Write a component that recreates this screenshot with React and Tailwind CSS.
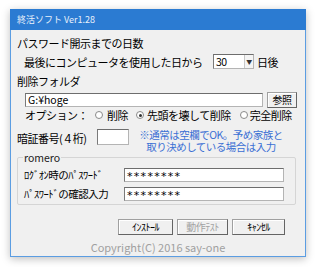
const jp = "font-['Meiryo_UI','Noto_Sans_CJK_JP',sans-serif]"

function Radio({ checked }) {
  return (
    <span className="flex h-[8px] w-[8px] items-center justify-center rounded-full border border-[#8a8a8a] bg-white">
      {checked && <span className="h-[3px] w-[3px] rounded-full bg-[#333]" />}
    </span>
  )
}

function Button({ children, disabled, w }) {
  return (
    <div
      className={`flex h-[16px] items-center justify-center border border-[#a0a0a0] border-b-[#646464] border-r-[#646464] bg-[#f0f0f0] text-[10px] shadow-[inset_1px_1px_0_#fff] ${w} ${
        disabled ? 'text-[#a3a3a3]' : 'text-black'
      }`}
    >
      {children}
    </div>
  )
}

function Field({ children, className }) {
  return (
    <div
      className={`flex items-center border border-[#b4b4b4] border-l-[#7a7a7a] border-t-[#6d6d6d] bg-white ${className}`}
    >
      {children}
    </div>
  )
}

export default function App() {
  return (
    <div className={`h-[267px] w-[316px] bg-white pl-[10px] pt-[9px] ${jp}`}>
      <div className="flex h-[248px] w-[296px] flex-col border border-[#5b9de2] bg-[#f0f0f0] shadow-[0_2px_8px_rgba(0,0,0,0.25)]">
        {/* title bar */}
        <div className="-mx-px -mt-px flex h-[21px] items-center bg-[#2b7bd2] pl-[7px] text-[9px] text-[#e8f1fb]">
          終活ソフト Ver1.28
        </div>

        <div className="flex flex-col pl-[6px] text-[11px] leading-[16px] tracking-[-0.5px] text-black">
          <div className="mt-[5px]">パスワード開示までの日数</div>

          <div className="mt-[3px] flex h-[15px] items-center pl-[7px]">
            <span className="w-[189px]">最後にコンピュータを使用した日から</span>
            <Field className="h-[15px] w-[41px] justify-between">
              <span className="pl-[2px] text-[10.5px]">30</span>
              <span className="flex h-[13px] w-[9px] items-center justify-center border-l border-[#c8c8c8] bg-[#f4f4f4] text-[6px] text-[#333]">
                ▼
              </span>
            </Field>
            <span className="ml-[3px]">日後</span>
          </div>

          <div className="mt-[4px]">削除フォルダ</div>

          <div className="mt-[3px] flex items-center pl-[8px]">
            <Field className="h-[14px] w-[238px]">
              <span className="pl-[2px] text-[10.5px] tracking-normal">G:¥hoge</span>
            </Field>
            <div className="ml-[4px]">
              <Button w="w-[30px]">参照</Button>
            </div>
          </div>

          <div className="flex h-[14px] items-center pl-[8px]">
            <span>オプション：</span>
            <span className="ml-[7px]">
              <Radio />
            </span>
            <span className="ml-[4px]">削除</span>
            <span className="ml-[8px]">
              <Radio checked />
            </span>
            <span className="ml-[3px]">先頭を壊して削除</span>
            <span className="ml-[9px]">
              <Radio />
            </span>
            <span className="ml-[2px]">完全削除</span>
          </div>

          <div className="mt-[7px] flex items-start">
            <span className="mt-px w-[80px]">暗証番号(４桁)</span>
            <Field className="h-[16px] w-[32px]" />
            <div className="ml-[6px] flex w-[152px] flex-col items-center text-[10.5px] leading-[11.5px] text-[#3a6fd4]">
              <span>※通常は空欄でOK。予め家族と</span>
              <span>取り決めしている場合は入力</span>
            </div>
          </div>

          <div className="relative mt-[5px] flex w-[279px] flex-col gap-[5px] rounded-[2px] border border-[#d5d5d5] pb-[3px] pl-[6px] pt-[10px]">
            <span className="absolute -top-[8px] left-[5px] bg-[#f0f0f0] px-[1px] text-[10.5px] tracking-normal text-[#222]">
              romero
            </span>
            <div className="flex h-[14px] items-center">
              <span className="w-[100px] text-[10.5px]">ﾛｸﾞｵﾝ時のﾊﾟｽﾜｰﾄﾞ</span>
              <Field className="h-[14px] w-[160px]">
                <span className="pl-[2px] pt-[3px] font-['DejaVu_Sans',sans-serif] text-[11px] tracking-[1.3px]">********</span>
              </Field>
            </div>
            <div className="flex h-[14px] items-center">
              <span className="w-[100px] text-[10.5px]">ﾊﾟｽﾜｰﾄﾞの確認入力</span>
              <Field className="h-[14px] w-[160px]">
                <span className="pl-[2px] pt-[3px] font-['DejaVu_Sans',sans-serif] text-[11px] tracking-[1.3px]">********</span>
              </Field>
            </div>
          </div>

          <div className="mt-[14px] flex gap-[4px] pl-[101px]">
            <Button w="w-[55px]">ｲﾝｽﾄｰﾙ</Button>
            <Button w="w-[51px]" disabled>
              動作ﾃｽﾄ
            </Button>
            <Button w="w-[53px]">ｷｬﾝｾﾙ</Button>
          </div>
        </div>

        <div className="mt-[4px] text-center text-[11px] tracking-normal text-[#a0a0a0]">
          Copyright(C) 2016 say-one
        </div>
      </div>
    </div>
  )
}
